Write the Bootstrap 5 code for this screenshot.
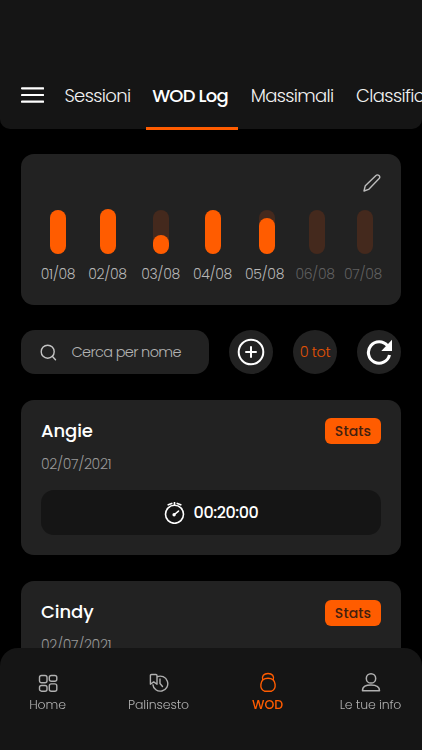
<!DOCTYPE html>
<html lang="it">
<head>
<meta charset="utf-8">
<meta name="viewport" content="width=device-width, initial-scale=1">
<title>WOD Log</title>
<link href="https://cdn.jsdelivr.net/npm/bootstrap@5.3.0/dist/css/bootstrap.min.css" rel="stylesheet">
<style>
:root{--accent:#ff5c00;--panel:#222;--deep:#151515}
body{background:#000;color:#fff;font-family:Poppins,Inter,sans-serif;font-weight:300;height:750px;overflow:hidden}
svg{display:block;flex:none}
.top-bar{background:var(--deep);height:129px;border-radius:0 0 10px 10px;padding-left:20.5px}
.menu-icon{margin-bottom:26px}
.tab-strip{height:68px;margin-left:16px}
.tab-strip .nav-link{color:#f2f2f2;font-size:18px;line-height:27px;height:69px;padding:21px 0 0;border-bottom:3px solid transparent;white-space:nowrap;text-align:center}
.tab-strip .nav-link.active{color:#fff;font-weight:500;border-color:var(--accent);padding-right:4px}
.t-ses{width:76px;letter-spacing:-.6px}.t-wod{width:92px;margin-left:10.5px;letter-spacing:-.8px}.t-mas{width:84px;margin-left:12px;letter-spacing:-.65px}.t-cla{margin-left:22px;letter-spacing:-.6px}
.content{padding:25px 21px 0}
.panel{background:var(--panel);border-radius:13px}
.days{height:151px}
.edit{height:56px;padding:20px 20px 0}
.day-grid{display:grid;grid-template-columns:49px 50px 56px 48px 56px 45px 51px;padding-left:12.5px}
.track{width:16px;height:44px;border-radius:8px;background:#44291d}
.fill{border-radius:8px;background:var(--accent);width:16px}
.over{margin-top:-1px;height:45px}
.shift{position:relative;left:2px}
.day-label{font-size:14px;line-height:20px;margin-top:10px;color:#b7b7b7;letter-spacing:-.35px}
.day-label.off{color:#606060}
.tools{margin-top:25px;height:44px}
.search{width:188px;border-radius:14px;padding-left:19px;font-size:14.5px;color:#b3b3b3;letter-spacing:-.65px}
.search span{margin-left:14.5px;padding-top:2px}
.round-btn{width:44px;height:44px;background:var(--panel);border-radius:50%;border:0;padding:0;margin-left:20px;color:#fff}
.round-btn.count{color:#e35205;font-size:14.5px;font-weight:300;letter-spacing:-.4px;white-space:nowrap;padding-top:2px}
.wod{margin-top:26px;height:155px;padding:18px 20px 0}
.wod-head{height:26px}
.wod h2{font-size:18px;line-height:26px;font-weight:500;margin:0;letter-spacing:-.1px}
.stats{background:var(--accent);color:#43200f;border-radius:6px;width:56px;height:26px;font-size:14px;line-height:26px;font-weight:500;text-align:center;letter-spacing:.1px}
.wod + .wod .stats{margin-top:1px}
.date{font-size:14px;line-height:20px;color:#999;margin-top:10px;letter-spacing:-.35px}
.time{background:var(--deep);height:45px;border-radius:13px;margin-top:16px;font-size:16px;font-weight:500;gap:9px;letter-spacing:-.45px}
.dock{height:102px;background:var(--deep);border-radius:18px 18px 0 0;color:#b0b0b0;font-size:12.5px;letter-spacing:-.12px}
.dock a{color:inherit;text-decoration:none;padding-top:24px;line-height:18px;white-space:nowrap}
.dock svg{margin-bottom:2px}
.dock a.on{color:var(--accent);font-weight:500}
.d1{width:95px}.d2{width:127px}.d3{width:91px}.d4{width:109px;padding-left:6px}
</style>
<script src="https://cdn.jsdelivr.net/npm/bootstrap@5.3.0/dist/js/bootstrap.bundle.min.js"></script>
</head>
<body>
<header class="top-bar d-flex align-items-end">
  <svg class="menu-icon" width="23" height="16" viewBox="0 0 23 16"><path d="M1 1.300h21.200M1 8h21.200M1 14.600h21.200" stroke="#fff" stroke-width="2.200" stroke-linecap="round"/></svg>
  <nav class="nav flex-nowrap tab-strip">
    <a class="nav-link t-ses" href="#">Sessioni</a>
    <a class="nav-link active t-wod" href="#">WOD Log</a>
    <a class="nav-link t-mas" href="#">Massimali</a>
    <a class="nav-link t-cla" href="#">Classific</a>
  </nav>
</header>
<main class="content">
  <section class="panel days">
    <div class="edit d-flex justify-content-end"><svg width="18" height="18" viewBox="0 0 18 18" fill="none" stroke="#bcbcbc" stroke-width="1.4" stroke-linejoin="round"><path d="M1 17 2.300 11.700 12.700 1.700c1-1 2.300-1 3.300-.1.9.9.8 2.300-.1 3.200L5.600 15.400Z"/></svg></div>
    <div class="day-grid">
      <div class="d-flex flex-column align-items-center"><div class="track"><div class="fill h-100"></div></div><div class="day-label">01/08</div></div>
      <div class="d-flex flex-column align-items-center"><div class="track"><div class="fill over"></div></div><div class="day-label">02/08</div></div>
      <div class="d-flex flex-column align-items-center"><div class="track d-flex align-items-end"><div class="fill" style="height:19px"></div></div><div class="day-label">03/08</div></div>
      <div class="d-flex flex-column align-items-center"><div class="track"><div class="fill h-100"></div></div><div class="day-label">04/08</div></div>
      <div class="d-flex flex-column align-items-center"><div class="track shift d-flex align-items-end"><div class="fill" style="height:36px"></div></div><div class="day-label">05/08</div></div>
      <div class="d-flex flex-column align-items-center"><div class="track shift"></div><div class="day-label off">06/08</div></div>
      <div class="d-flex flex-column align-items-center"><div class="track shift"></div><div class="day-label off">07/08</div></div>
    </div>
  </section>
  <div class="tools d-flex">
    <div class="panel search d-flex align-items-center"><svg width="17" height="17" viewBox="0 0 17 17" fill="none" stroke="#c4c4c4" stroke-width="1.4" stroke-linecap="round"><circle cx="7.700" cy="7.700" r="6.500"/><path d="m12.300 12.300 3.200 3.500"/></svg><span>Cerca per nome</span></div>
    <button class="round-btn d-flex align-items-center justify-content-center" aria-label="Aggiungi"><svg width="28" height="28" viewBox="0 0 28 28" fill="none" stroke="#fff" stroke-width="2" stroke-linecap="round"><circle cx="14" cy="14" r="12.300"/><path d="M14 9v10M9 14h10"/></svg></button>
    <div class="round-btn count d-flex align-items-center justify-content-center">0 tot</div>
    <button class="round-btn d-flex align-items-center justify-content-center" aria-label="Aggiorna"><svg width="26" height="26" viewBox="0 0 26 26"><path d="M21.500 6.800A10.700 10.700 0 1 0 23.500 16" fill="none" stroke="#fff" stroke-width="3.100"/><path d="M26 .8V12H15.300Z" fill="#fff"/></svg></button>
  </div>
  <article class="panel wod">
    <div class="wod-head d-flex justify-content-between align-items-start"><h2>Angie</h2><div class="stats">Stats</div></div>
    <div class="date">02/07/2021</div>
    <div class="time d-flex align-items-center justify-content-center"><svg width="21" height="22" viewBox="0 0 21 22" fill="none" stroke="#fff" stroke-width="1.600"><circle cx="10.500" cy="12.300" r="9"/><path d="M10.500 0v3.200M8.400 1.200 3.600 2.900M12.600 1.200l4.800 1.700"/><path d="m9.800 13 4.700-3.900" stroke-linecap="round"/><circle cx="10.100" cy="12.700" r=".9" fill="#fff"/></svg><span>00:20:00</span></div>
  </article>
  <article class="panel wod">
    <div class="wod-head d-flex justify-content-between align-items-start"><h2>Cindy</h2><div class="stats">Stats</div></div>
    <div class="date">02/07/2021</div>
  </article>
</main>
<nav class="dock fixed-bottom d-flex">
  <a class="d1 d-flex flex-column align-items-center" href="#"><svg width="20" height="22" viewBox="0 0 20 22" fill="none" stroke="currentColor" stroke-width="1.400"><rect x="1.500" y="3.500" width="7.500" height="7.300" rx="2"/><rect x="11.300" y="3.500" width="7.500" height="5.800" rx="2"/><rect x="1.500" y="13.500" width="7.500" height="5.700" rx="2"/><rect x="11.300" y="11.900" width="7.500" height="7.300" rx="2"/></svg>Home</a>
  <a class="d2 d-flex flex-column align-items-center" href="#"><svg width="20" height="22" viewBox="0 0 20 22" fill="none" stroke="currentColor" stroke-width="1.400" stroke-linejoin="round"><path d="M1.400 12.200V3.600q0-1.100 1.100-1.100h4.400Q8 2.500 8 3.600v8.600l-3.300-2.300Z"/><path d="M8 4.900a7.500 7.500 0 1 1-4.200 7.500"/><path d="M11 7v4.500l2.500 3" stroke-linecap="round"/></svg>Palinsesto</a>
  <a class="d3 on d-flex flex-column align-items-center" href="#"><svg width="20" height="22" viewBox="0 0 20 22" fill="none" stroke="currentColor" stroke-width="1.400" stroke-linejoin="round"><path d="M6.500 19.200C3.500 17.800 2.600 15 2.900 12.300 3.300 8.800 5.600 6.300 10 6.300s6.700 2.500 7.100 6c.3 2.700-.6 5.500-3.600 6.900Z"/><path d="M4.800 8.300C3.300 4 6 1.500 10 1.500s6.700 2.500 5.200 6.800"/></svg>WOD</a>
  <a class="d4 d-flex flex-column align-items-center" href="#"><svg width="20" height="22" viewBox="0 0 20 22" fill="none" stroke="currentColor" stroke-width="1.500" stroke-linejoin="round"><circle cx="10" cy="6.400" r="4.700"/><path d="M1.500 18.800C1.500 14.300 5 13 10 13s8.500 1.300 8.500 5.800Z"/></svg>Le tue info</a>
</nav>
</body>
</html>
